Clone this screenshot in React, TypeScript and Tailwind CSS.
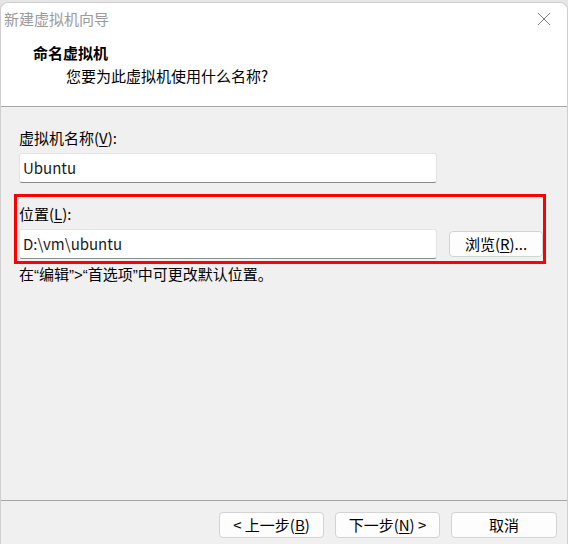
const font = { fontFamily: '"Noto Sans CJK SC", "Liberation Sans", sans-serif' };

const Mn = ({ k }: { k: string }) => <span className="underline underline-offset-2">{k}</span>;

// narrow quotes like the Windows UI font, not the full-width CJK ones
const Q = ({ c }: { c: string }) => <span style={{ fontFamily: '"Liberation Sans", sans-serif' }}>{c}</span>;

const Btn = ({ children, w }: { children: React.ReactNode; w: string }) => (
  <button className={`${w} h-[26px] bg-[#fdfdfd] border border-[#d3d3d3] rounded-[4px] text-[15px] leading-[20px] text-black`}>
    {children}
  </button>
);

const Field = ({ value }: { value: string }) => (
  <div className="w-[418px] h-[30px] bg-white border border-[#e3e3e3] border-b-[#8c8c8c] rounded-[3px] px-[3px] flex items-center text-[15px] text-[#1a1a1a]">
    {value}
  </div>
);

const App = () => {
  return (
    <div className="w-[568px] h-[544px] bg-[#e6e6e6] pt-[2px]" style={font}>
      <div className="h-[542px] flex flex-col bg-[#f0f0f0] rounded-t-[8px] border-t border-x border-[#cfcfcf] overflow-hidden">
        <div className="bg-white h-[103px] flex flex-col">
          <div className="h-[32px] flex items-center justify-between pl-[3px] pr-[16px]">
            <span className="text-[15px] text-[#9b9b9b]">新建虚拟机向导</span>
            <svg width="14" height="14" viewBox="0 0 14 14">
              <path d="M1 1 L13 13 M13 1 L1 13" stroke="#7a7a7a" strokeWidth="1" />
            </svg>
          </div>
          <div className="pl-[32px] pt-[7px] text-[15px] leading-[22px] font-bold text-black">命名虚拟机</div>
          <div className="pl-[65px] pt-[1px] text-[15px] leading-[22px] text-black">您要为此虚拟机使用什么名称?</div>
        </div>
        <div className="h-[2px] bg-[#a5a5a5] border-b border-[#f0f0f0]" />
        <div className="flex-1 flex flex-col pl-[18px] pt-[20px] text-[15px] leading-[20px] text-black">
          <div>
            虚拟机名称(<Mn k="V" />):
          </div>
          <div className="mt-[5px]">
            <Field value="Ubuntu" />
          </div>
          <div className="mt-[11px] -ml-[5px] w-[532px] border-[3px] border-[#ff0000] pl-[2px] pt-[7px] pb-[2px]">
            <div>
              位置(<Mn k="L" />):
            </div>
            <div className="mt-[5px] flex items-center gap-[12px]">
              <Field value="D:\vm\ubuntu" />
              <Btn w="w-[94px]">
                浏览(<Mn k="R" />)...
              </Btn>
            </div>
          </div>
          <div>
            在<Q c="“" />编辑<Q c="”" />
            <Q c=">" />
            <Q c="“" />首选项<Q c="”" />中可更改默认位置。
          </div>
        </div>
        <div className="h-[1px] bg-[#a5a5a5]" />
        <div className="h-[43px] flex items-center justify-end gap-[11px] pr-[10px] pt-[4px]">
          <Btn w="w-[105px]">
            &lt; 上一步(<Mn k="B" />)
          </Btn>
          <Btn w="w-[105px]">
            下一步(<Mn k="N" />) &gt;
          </Btn>
          <Btn w="w-[106px]">取消</Btn>
        </div>
      </div>
    </div>
  );
};

export default App;
